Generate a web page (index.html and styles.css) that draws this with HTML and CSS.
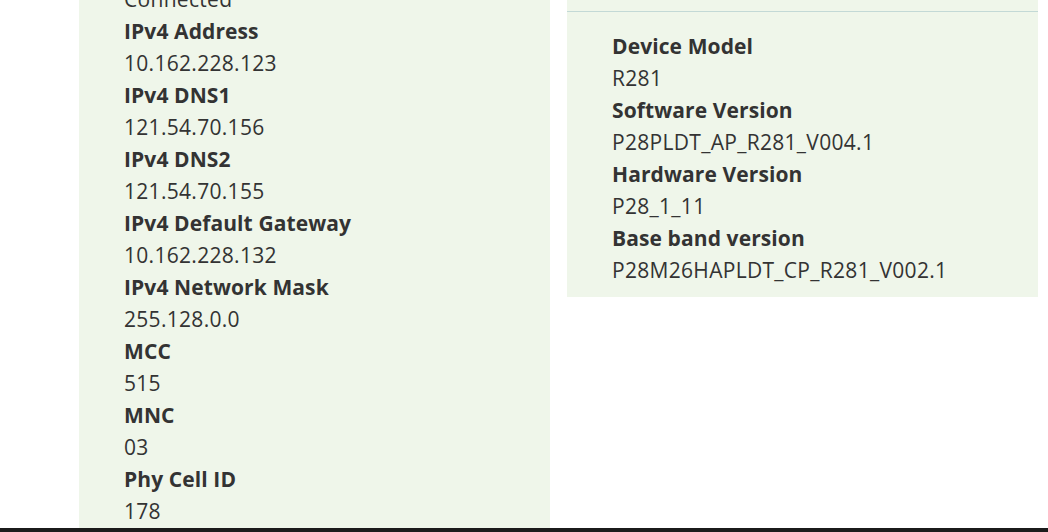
FILE: index.html
```html
<!DOCTYPE html>
<html>
<head>
  <title>Device Information</title>
  <meta name="viewport" content="width=device-width, initial-scale=1.0">
  <link rel="stylesheet" href="styles.css">
</head>
<body>

  <div class="content">
    <div class="panel panel-left">
      <dl class="info">
        <dd>Connected</dd>
        <dt>IPv4 Address</dt>
        <dd>10.162.228.123</dd>
        <dt>IPv4 DNS1</dt>
        <dd>121.54.70.156</dd>
        <dt>IPv4 DNS2</dt>
        <dd>121.54.70.155</dd>
        <dt>IPv4 Default Gateway</dt>
        <dd>10.162.228.132</dd>
        <dt>IPv4 Network Mask</dt>
        <dd>255.128.0.0</dd>
        <dt>MCC</dt>
        <dd>515</dd>
        <dt>MNC</dt>
        <dd>03</dd>
        <dt>Phy Cell ID</dt>
        <dd>178</dd>
      </dl>
    </div>

    <div class="panel panel-right">
      <div class="panel-head"></div>
      <dl class="info">
        <dt>Device Model</dt>
        <dd>R281</dd>
        <dt>Software Version</dt>
        <dd>P28PLDT_AP_R281_V004.1</dd>
        <dt>Hardware Version</dt>
        <dd>P28_1_11</dd>
        <dt>Base band version</dt>
        <dd>P28M26HAPLDT_CP_R281_V002.1</dd>
      </dl>
    </div>
  </div>

  <div class="taskbar"></div>

</body>
</html>
```

FILE: styles.css
```css
html, body {
  margin: 0;
  padding: 0;
  height: 100%;
  background: #fff;
  overflow: hidden;
  font-family: "Open Sans", "Noto Sans", sans-serif;
  color: #333;
}

.content {
  display: flex;
  align-items: flex-start;
  gap: 17px;
  padding-left: 79px;
}

.panel {
  width: 471px;
  background: #eff6ea;
  box-sizing: border-box;
}

.panel-left {
  margin-top: -17px;
  padding: 0 45px 40px;
}

.panel-right {
  padding: 0 0 11px;
}

.panel-head {
  height: 11px;
  border-bottom: 1px solid #c3d9d6;
  margin-bottom: 18px;
}

.panel-right .info {
  padding: 0 45px;
}

.info {
  margin: 0;
  font-size: 21px;
  line-height: 32px;
}

.info dt {
  font-weight: 700;
  letter-spacing: 0.1px;
}

.info dd {
  margin: 0;
  letter-spacing: 0.3px;
}

/* bottom edge of the window */
.taskbar {
  position: fixed;
  left: 0;
  right: 0;
  bottom: 0;
  height: 4px;
  background: #1b1b1b;
}
```
